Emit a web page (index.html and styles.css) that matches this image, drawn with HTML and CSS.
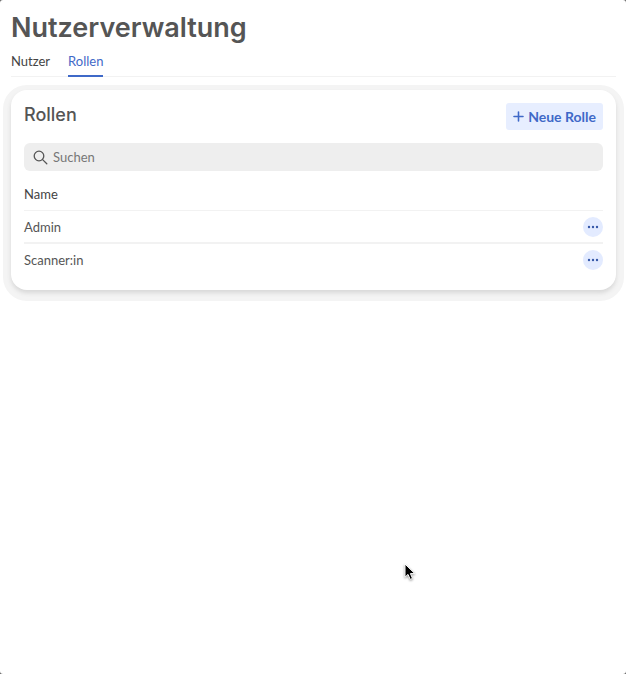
FILE: index.html
```html
<!doctype html>
<html lang="de">
<head>
<meta charset="utf-8">
<title>Nutzerverwaltung</title>
<meta name="viewport" content="width=device-width,initial-scale=1">
<link rel="stylesheet" href="styles.css">
</head>
<body>
<h1>Nutzerverwaltung</h1>

<nav class="tabs">
  <a href="#nutzer">Nutzer</a>
  <a href="#rollen" class="active" aria-current="page">Rollen</a>
</nav>

<main class="card">
  <header class="card-head">
    <h2>Rollen</h2>
    <button type="button" class="new-role">
      <svg width="11" height="11" viewBox="0 0 11 11" aria-hidden="true"><path d="M5.5 1v9M1 5.5h9"/></svg>
      <span>Neue Rolle</span>
    </button>
  </header>

  <label class="search">
    <svg width="15" height="15" viewBox="0 0 15 15" aria-hidden="true"><circle cx="6" cy="6" r="4.8"/><path d="M9.6 9.6l4.2 4.2"/></svg>
    <input type="search" placeholder="Suchen" aria-label="Suchen">
  </label>

  <table class="roles">
    <thead>
      <tr><th colspan="2">Name</th></tr>
    </thead>
    <tbody>
      <tr>
        <td>Admin</td>
        <td class="action"><button type="button" class="more" aria-label="Aktionen für Admin"><svg width="12" height="4" viewBox="0 0 12 4"><circle cx="2" cy="2" r="1.2"/><circle cx="6" cy="2" r="1.2"/><circle cx="10" cy="2" r="1.2"/></svg></button></td>
      </tr>
      <tr>
        <td>Scanner:in</td>
        <td class="action"><button type="button" class="more" aria-label="Aktionen für Scanner:in"><svg width="12" height="4" viewBox="0 0 12 4"><circle cx="2" cy="2" r="1.2"/><circle cx="6" cy="2" r="1.2"/><circle cx="10" cy="2" r="1.2"/></svg></button></td>
      </tr>
    </tbody>
  </table>
</main>

<!-- mouse pointer -->
<svg class="pointer" width="12" height="18" viewBox="0 0 12 18" aria-hidden="true"><path d="M1 1v13.2l3-2.8 2.2 5 2.3-1-2.1-4.8h4.4z"/></svg>
</body>
</html>
```
FILE: styles.css
```css
html{background:#666;}
body{
  box-sizing:border-box;
  min-height:100vh;
  margin:0;
  padding:10px 10px 10px 11px;
  background:#fff;
  border-radius:3px;
  color:#555;
  font:13px/20px Lato,sans-serif;
}
h1,h2{margin:0;font-family:Inter,sans-serif;font-weight:600;}
h1{font-size:27px;line-height:36px;}
h2{font-size:18px;line-height:24px;font-weight:500;}
button,input{font:inherit;}
button{border:0;cursor:pointer;}

.tabs{display:flex;gap:18px;border-bottom:1px solid #f2f2f2;}
.tabs a{padding:5px 0 4px;color:#444;text-decoration:none;border-bottom:2px solid transparent;margin-bottom:-1px;}
.tabs .active{color:#3f69c8;border-color:#3f69c8;}

.card{
  margin-top:13px;
  padding:13px 13px 15px;
  border-radius:16px;
  background:#fff;
  box-shadow:0 3px 4px 0 #d8d8d8,0 3px 0 8px #f4f4f4;
}
.card-head{display:flex;justify-content:space-between;align-items:flex-start;}

.new-role{
  display:flex;
  align-items:center;
  gap:4px;
  height:27px;
  padding:0 7px;
  border-radius:3px;
  background:#e7eeff;
  color:#3f69c8;
  font-size:14px;
  font-weight:700;
}
.new-role svg{fill:none;stroke:currentColor;stroke-width:1.6;stroke-linecap:round;}

.search{
  display:flex;
  align-items:center;
  gap:5px;
  height:28px;
  margin-top:13px;
  padding:0 9px;
  border-radius:6px;
  background:#eee;
}
.search svg{fill:none;stroke:#555;stroke-width:1.3;stroke-linecap:round;}
.search input{flex:1;min-width:0;padding:0;border:0;outline:0;background:none;color:#555;}
.search input::placeholder{color:#777;opacity:1;}

.roles{width:100%;margin-top:7px;border-collapse:collapse;}
.roles th{height:32px;}
.roles td{height:31px;}
.roles th,.roles td{padding:0;text-align:left;}
.roles th{font-weight:400;color:#444;}
.roles tbody tr{border-top:1px solid #f2f2f2;}
.roles tbody tr + tr{border-top:2px solid #f2f2f2;}
.roles .action{width:20px;}
.more{
  display:flex;
  align-items:center;
  justify-content:center;
  width:20px;
  height:20px;
  padding:0;
  border-radius:50%;
  background:#e3ebff;
}
.more svg{fill:#3558a8;}

.pointer{position:absolute;left:404px;top:563px;fill:#000;stroke:#fff;stroke-width:1;filter:drop-shadow(0 1px 1px #999);}
```
